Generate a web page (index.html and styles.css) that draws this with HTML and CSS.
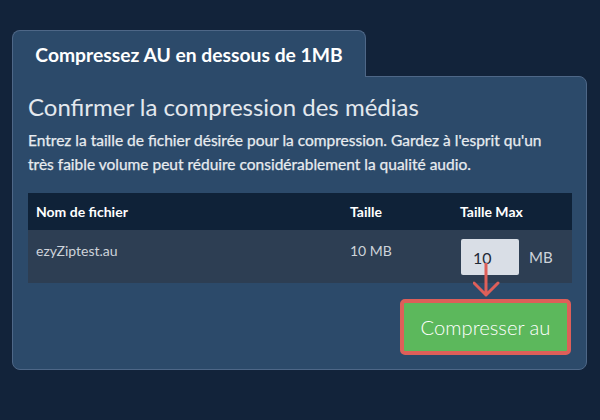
FILE: index.html
```html
<!DOCTYPE html>
<html lang="fr">
<head>
<meta charset="utf-8">
<title>Compresser AU</title>
<link rel="stylesheet" href="styles.css">
</head>
<body>
<div class="wrap">
  <div class="tab">Compressez AU en dessous de 1MB</div>
  <div class="card">
    <h2 class="title">Confirmer la compression des médias</h2>
    <p class="desc">Entrez la taille de fichier désirée pour la compression. Gardez à l'esprit qu'un très faible volume peut réduire considérablement la qualité audio.</p>
    <table class="files">
      <thead>
        <tr><th class="c1">Nom de fichier</th><th class="c2">Taille</th><th class="c3">Taille Max</th></tr>
      </thead>
      <tbody>
        <tr>
          <td class="c1">ezyZiptest.au</td>
          <td class="c2">10 MB</td>
          <td class="c3"><div class="maxcell"><span class="inp">10</span><span class="unit">MB</span></div></td>
        </tr>
      </tbody>
    </table>
    <div class="actions">
      <button class="btn">Compresser au</button>
    </div>
    <svg class="arrow" width="30" height="36" viewBox="0 0 30 36">
      <path d="M13 0 V32 M1 20 L13 32 L25 20" fill="none" stroke="#de5f59" stroke-width="3" stroke-linecap="round" stroke-linejoin="round"/>
    </svg>
  </div>
</div>
</body>
</html>
```

FILE: styles.css
```css
html, body {
  margin: 0;
  padding: 0;
  background: #12233a;
  height: 100%;
}
body {
  font-family: Lato, "Open Sans", sans-serif;
}
.wrap {
  padding: 30px 0 0 12px;
  width: 575px;
}
.tab {
  position: relative;
  z-index: 2;
  width: 354px;
  height: 47px;
  box-sizing: border-box;
  background: #2c4a6a;
  border: 1px solid #4e6787;
  border-bottom: none;
  border-radius: 8px 8px 0 0;
  color: #ffffff;
  font-weight: 700;
  font-size: 19.3px;
  text-align: center;
  line-height: 47px;
  margin-bottom: -1px;
  padding-bottom: 1px;
}
.card {
  position: relative;
  background: #2c4a6a;
  border: 1px solid #4e6787;
  border-radius: 0 8px 8px 8px;
  padding: 14px 15px 14px 15px;
}
.title {
  margin: 0;
  font-weight: 400;
  font-size: 24px;
  line-height: 32px;
  color: #e3e8ee;
}
.desc {
  margin: 6px 0 0 0;
  font-size: 15.5px;
  line-height: 23.5px;
  color: #e8ecf0;
  -webkit-text-stroke: 0.25px #e8ecf0;
}
.files {
  margin-top: 17px;
  width: 544px;
  border-collapse: collapse;
  font-size: 14px;
}
.files th {
  background: #0f2238;
  color: #ffffff;
  font-weight: 700;
  text-align: left;
  padding: 0 8px;
  height: 37px;
}
.files td {
  background: #2d3e53;
  color: #cdd3da;
  vertical-align: top;
  padding: 12px 8px 0 8px;
  height: 41px;
}
.c1 { width: 298px; }
.c2 { width: 94px; }
.files td.c3 { padding-top: 9px; }
.maxcell {
  display: flex;
  align-items: center;
  gap: 10px;
  margin-left: 1px;
}
.inp {
  display: block;
  width: 46px;
  height: 36px;
  line-height: 38px;
  padding-left: 12px;
  background: #d9dee6;
  border-radius: 2px;
  color: #1f2a36;
  font-size: 16px;
}
.unit {
  font-size: 15px;
  color: #cdd3da;
}
.actions {
  display: flex;
  justify-content: flex-end;
  margin-top: 16px;
}
.btn {
  width: 171px;
  height: 56px;
  box-sizing: border-box;
  background: #5cb85c;
  border: 4.5px solid #de5f59;
  border-radius: 5px;
  color: #ffffff;
  font-family: Lato, sans-serif;
  font-weight: 300;
  font-size: 20.2px;
  padding: 0;
}
.arrow {
  position: absolute;
  left: 460px;
  top: 186px;
}
```
